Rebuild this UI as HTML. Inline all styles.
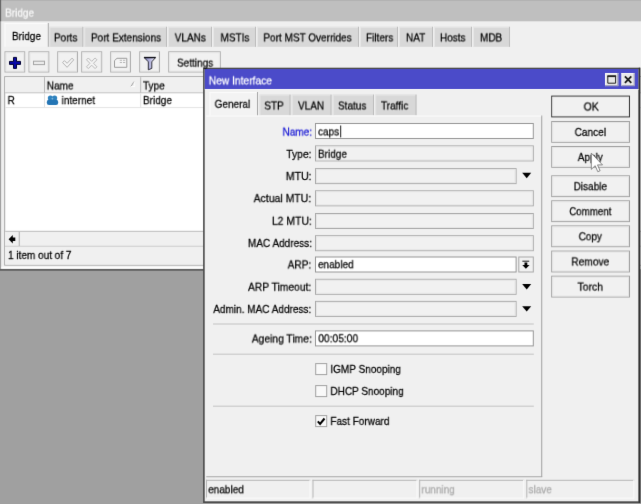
<!DOCTYPE html>
<html><head><meta charset="utf-8"><title>Bridge</title>
<style>
*{box-sizing:border-box;margin:0;padding:0}
html,body{width:641px;height:504px;overflow:hidden;background:#a0a0a0}
body{position:relative;font-family:"Liberation Sans",sans-serif;font-size:11px;color:#000;line-height:13px;-webkit-text-stroke:.25px}
#all{position:absolute;left:0;top:0;width:641px;height:504px;background:#a0a0a0;overflow:hidden;filter:url(#soft)}
svg{position:absolute;left:0;top:0}
.t{position:absolute;top:0;display:block;white-space:nowrap;will-change:transform}
</style></head><body>
<svg width="0" height="0"><filter id="soft" x="0" y="0" width="100%" height="100%" color-interpolation-filters="sRGB"><feConvolveMatrix order="3" kernelMatrix="0 1 0 1 12 1 0 1 0" edgeMode="duplicate" preserveAlpha="true"/></filter></svg>
<div id="all">
<svg width="641" height="504" viewBox="0 0 641 504">
<rect x="0" y="0" width="641" height="269.2" fill="#f0f0f0"/>
<rect x="0" y="0" width="641" height="21.3" fill="#bfbfbf"/>
<rect x="0" y="0" width="641" height="1" fill="#b2b2b2"/>
<rect x="0" y="0" width="1.1" height="269.2" fill="#a0a0a0"/>
<rect x="0" y="0" width="1.1" height="21.3" fill="#666"/>
<rect x="0" y="269.2" width="204" height="1.4" fill="#4c4c4c"/>
<rect x="4.5" y="23" width="44.3" height="23.799999999999997" fill="#f3f3f3"/>
<path d="M5.0 23L5.0 46.8" stroke="#fbfbfb" stroke-width="1" fill="none"/>
<path d="M4.5 23.5L48.8 23.5" stroke="#fbfbfb" stroke-width="1" fill="none"/>
<path d="M48.3 23L48.3 46.8" stroke="#a8a8a8" stroke-width="1" fill="none"/>
<rect x="49.3" y="26.8" width="34.0" height="19.999999999999996" fill="#d8d8d8"/>
<path d="M49.8 26.8L49.8 46.8" stroke="#e6e6e6" stroke-width="1" fill="none"/>
<path d="M49.3 27.3L83.3 27.3" stroke="#e6e6e6" stroke-width="1" fill="none"/>
<path d="M82.8 26.8L82.8 46.8" stroke="#bcbcbc" stroke-width="1" fill="none"/>
<rect x="84.3" y="26.8" width="82.7" height="19.999999999999996" fill="#d8d8d8"/>
<path d="M84.8 26.8L84.8 46.8" stroke="#e6e6e6" stroke-width="1" fill="none"/>
<path d="M84.3 27.3L167 27.3" stroke="#e6e6e6" stroke-width="1" fill="none"/>
<path d="M166.5 26.8L166.5 46.8" stroke="#bcbcbc" stroke-width="1" fill="none"/>
<rect x="168" y="26.8" width="44" height="19.999999999999996" fill="#d8d8d8"/>
<path d="M168.5 26.8L168.5 46.8" stroke="#e6e6e6" stroke-width="1" fill="none"/>
<path d="M168 27.3L212 27.3" stroke="#e6e6e6" stroke-width="1" fill="none"/>
<path d="M211.5 26.8L211.5 46.8" stroke="#bcbcbc" stroke-width="1" fill="none"/>
<rect x="213" y="26.8" width="43" height="19.999999999999996" fill="#d8d8d8"/>
<path d="M213.5 26.8L213.5 46.8" stroke="#e6e6e6" stroke-width="1" fill="none"/>
<path d="M213 27.3L256 27.3" stroke="#e6e6e6" stroke-width="1" fill="none"/>
<path d="M255.5 26.8L255.5 46.8" stroke="#bcbcbc" stroke-width="1" fill="none"/>
<rect x="257" y="26.8" width="102" height="19.999999999999996" fill="#d8d8d8"/>
<path d="M257.5 26.8L257.5 46.8" stroke="#e6e6e6" stroke-width="1" fill="none"/>
<path d="M257 27.3L359 27.3" stroke="#e6e6e6" stroke-width="1" fill="none"/>
<path d="M358.5 26.8L358.5 46.8" stroke="#bcbcbc" stroke-width="1" fill="none"/>
<rect x="360" y="26.8" width="38" height="19.999999999999996" fill="#d8d8d8"/>
<path d="M360.5 26.8L360.5 46.8" stroke="#e6e6e6" stroke-width="1" fill="none"/>
<path d="M360 27.3L398 27.3" stroke="#e6e6e6" stroke-width="1" fill="none"/>
<path d="M397.5 26.8L397.5 46.8" stroke="#bcbcbc" stroke-width="1" fill="none"/>
<rect x="399" y="26.8" width="34" height="19.999999999999996" fill="#d8d8d8"/>
<path d="M399.5 26.8L399.5 46.8" stroke="#e6e6e6" stroke-width="1" fill="none"/>
<path d="M399 27.3L433 27.3" stroke="#e6e6e6" stroke-width="1" fill="none"/>
<path d="M432.5 26.8L432.5 46.8" stroke="#bcbcbc" stroke-width="1" fill="none"/>
<rect x="434" y="26.8" width="38" height="19.999999999999996" fill="#d8d8d8"/>
<path d="M434.5 26.8L434.5 46.8" stroke="#e6e6e6" stroke-width="1" fill="none"/>
<path d="M434 27.3L472 27.3" stroke="#e6e6e6" stroke-width="1" fill="none"/>
<path d="M471.5 26.8L471.5 46.8" stroke="#bcbcbc" stroke-width="1" fill="none"/>
<rect x="473" y="26.8" width="37" height="19.999999999999996" fill="#d8d8d8"/>
<path d="M473.5 26.8L473.5 46.8" stroke="#e6e6e6" stroke-width="1" fill="none"/>
<path d="M473 27.3L510 27.3" stroke="#e6e6e6" stroke-width="1" fill="none"/>
<path d="M509.5 26.8L509.5 46.8" stroke="#bcbcbc" stroke-width="1" fill="none"/>
<rect x="5.0" y="51.8" width="19.7" height="20.200000000000003" fill="#f1f1f1" stroke="#adadad" stroke-width="1"/>
<rect x="6.0" y="52.8" width="17.7" height="18.200000000000003" fill="none" stroke="#e8e8e8" stroke-width="1"/>
<rect x="29.0" y="51.8" width="19.799999999999997" height="20.200000000000003" fill="#f1f1f1" stroke="#adadad" stroke-width="1"/>
<rect x="30.0" y="52.8" width="17.799999999999997" height="18.200000000000003" fill="none" stroke="#e8e8e8" stroke-width="1"/>
<rect x="57.7" y="51.8" width="19.799999999999997" height="20.200000000000003" fill="#f1f1f1" stroke="#adadad" stroke-width="1"/>
<rect x="58.7" y="52.8" width="17.799999999999997" height="18.200000000000003" fill="none" stroke="#e8e8e8" stroke-width="1"/>
<rect x="81.7" y="51.8" width="20.0" height="20.200000000000003" fill="#f1f1f1" stroke="#adadad" stroke-width="1"/>
<rect x="82.7" y="52.8" width="18.0" height="18.200000000000003" fill="none" stroke="#e8e8e8" stroke-width="1"/>
<rect x="110.7" y="51.8" width="19.799999999999997" height="20.200000000000003" fill="#f1f1f1" stroke="#adadad" stroke-width="1"/>
<rect x="111.7" y="52.8" width="17.799999999999997" height="18.200000000000003" fill="none" stroke="#e8e8e8" stroke-width="1"/>
<rect x="139.7" y="51.8" width="19.80000000000001" height="20.200000000000003" fill="#f1f1f1" stroke="#adadad" stroke-width="1"/>
<rect x="140.7" y="52.8" width="17.80000000000001" height="18.200000000000003" fill="none" stroke="#e8e8e8" stroke-width="1"/>
<rect x="168.7" y="51.8" width="51.60000000000002" height="20.200000000000003" fill="#f1f1f1" stroke="#adadad" stroke-width="1"/>
<rect x="169.7" y="52.8" width="49.60000000000002" height="18.200000000000003" fill="none" stroke="#e8e8e8" stroke-width="1"/>
<path d="M13.5 57.4h3v4h4v3h-4v4h-3v-4h-4v-3h4z" fill="#0808a8" stroke="#000030" stroke-width="1"/>
<rect x="33.5" y="61.2" width="11" height="3.4" fill="#ececec" stroke="#a4a4a4" stroke-width="1"/>
<path d="M62.5 62.5l2-1.8 2.6 2.6 5-5.2 1.6 1.8-6.6 7.4z" fill="#f4f4f4" stroke="#b4b4b4" stroke-width="1"/>
<path d="M86.5 59.8l1.8-1.8 3.4 3.4 3.4-3.4 1.8 1.8-3.4 3.5 3.4 3.5-1.8 1.8-3.4-3.4-3.4 3.4-1.8-1.8 3.4-3.5z" fill="#f4f4f4" stroke="#bababa" stroke-width="1"/>
<path d="M114.5 60.6l2.5-2.3h9.8v9h-12.3z" fill="#f4f4f4" stroke="#9c9c9c" stroke-width="1"/>
<path d="M119.8 60.3h2.2M123 60.3h2.2M119.8 62.5h2.2M123 62.5h2.2" fill="none" stroke="#b0b0b0" stroke-width="0.9"/>
<defs><linearGradient id="fg" x1="0" x2="1" y1="0" y2="0"><stop offset="0" stop-color="#7c7cbc"/><stop offset=".5" stop-color="#b4b4de"/><stop offset="1" stop-color="#f4f4fc"/></linearGradient></defs>
<path d="M144.3 57.7h11.1l-3.6 4.1v6.6l-3.5 1.4v-8z" fill="url(#fg)" stroke="#20202a" stroke-width="0.9" stroke-linejoin="round"/>
<path d="M144 57.5h11.7" fill="none" stroke="#101018" stroke-width="1.3"/>
<rect x="4.7" y="76.7" width="639.8" height="188.40000000000003" fill="#fff" stroke="#a4a4a4" stroke-width="1"/>
<path d="M1.2 267.4L204 267.4" stroke="#fdfdfd" stroke-width="1.2" fill="none"/>
<rect x="5.2" y="77.2" width="640" height="15.3" fill="#f0f0f0"/>
<path d="M5.2 92.8L641 92.8" stroke="#c0c0c0" stroke-width="1" fill="none"/>
<path d="M44.5 77.2L44.5 92.8" stroke="#b8b8b8" stroke-width="1" fill="none"/>
<path d="M140.7 77.2L140.7 92.8" stroke="#b8b8b8" stroke-width="1" fill="none"/>
<path d="M44.5 93.3L44.5 107.5" stroke="#e0e0e0" stroke-width="1" fill="none"/>
<path d="M140.7 93.3L140.7 107.5" stroke="#e0e0e0" stroke-width="1" fill="none"/>
<path d="M5.2 107.6L641 107.6" stroke="#e4e4e4" stroke-width="1" fill="none"/>
<path d="M131 86.5l3-5" fill="none" stroke="#a0a0a0" stroke-width="1"/>
<path d="M134 81.5l1 5h-4" fill="none" stroke="#fcfcfc" stroke-width="1"/>
<g><circle cx="50.4" cy="98" r="2.6" fill="#2f82be"/><circle cx="54.6" cy="98" r="2.6" fill="#2f82be"/><rect x="46.8" y="99.8" width="11.4" height="5.2" rx="2.2" fill="#2475b5"/><circle cx="52.4" cy="98.6" r=".9" fill="#7ab6de"/></g>
<rect x="5.2" y="231" width="640" height="15.2" fill="#f0f0f0"/>
<path d="M5.2 231.3L641 231.3" stroke="#bcbcbc" stroke-width="1" fill="none"/>
<path d="M5.2 246.3L641 246.3" stroke="#bcbcbc" stroke-width="1" fill="none"/>
<path d="M19.3 231.5L19.3 246" stroke="#b8b8b8" stroke-width="1.2" fill="none"/>
<path d="M8.6 239.2l4.2-4.3v2.6h2.5v3.4h-2.5v2.6z" fill="#000"/>
<rect x="5.2" y="246.7" width="640" height="17.9" fill="#f0f0f0"/>
<rect x="203.10000000000002" y="67.7" width="437.19999999999993" height="435.3" fill="#4a4a4a"/>
<rect x="204.70000000000002" y="69.1" width="433.69999999999993" height="432.2" fill="#f0f0f0"/>
<rect x="204.8" y="69.0" width="433.4" height="20.0" fill="#4b4bc9"/>
<rect x="638.8" y="67.7" width="1.4" height="435.3" fill="#303030"/>
<path d="M204.8 89.5L638.6 89.5" stroke="#f8f8f8" stroke-width="0.8" fill="none"/>
<rect x="605" y="73" width="13.299999999999955" height="13.099999999999994" fill="#e8e8e8"/>
<path d="M605 73.5L618.3 73.5" stroke="#f8f8f8" stroke-width="1" fill="none"/>
<path d="M605.5 73L605.5 86.1" stroke="#f8f8f8" stroke-width="1" fill="none"/>
<path d="M605 85.6L618.3 85.6" stroke="#9c9cb8" stroke-width="1" fill="none"/>
<path d="M617.8 73L617.8 86.1" stroke="#9c9cb8" stroke-width="1" fill="none"/>
<rect x="621.5" y="73" width="13.200000000000045" height="13.099999999999994" fill="#e8e8e8"/>
<path d="M621.5 73.5L634.7 73.5" stroke="#f8f8f8" stroke-width="1" fill="none"/>
<path d="M622.0 73L622.0 86.1" stroke="#f8f8f8" stroke-width="1" fill="none"/>
<path d="M621.5 85.6L634.7 85.6" stroke="#9c9cb8" stroke-width="1" fill="none"/>
<path d="M634.2 73L634.2 86.1" stroke="#9c9cb8" stroke-width="1" fill="none"/>
<path d="M607.8 76.2h7.8v7h-7.8z" fill="none" stroke="#202020" stroke-width="1"/>
<path d="M607.3 76.2L616.1 76.2" stroke="#202020" stroke-width="1.8" fill="none"/>
<path d="M624.9 76.4l6.4 6.4M631.3 76.4l-6.4 6.4" fill="none" stroke="#181818" stroke-width="1.8"/>
<rect x="209.5" y="92" width="48.5" height="23.5" fill="#f3f3f3"/>
<path d="M210.0 92L210.0 115.5" stroke="#fbfbfb" stroke-width="1" fill="none"/>
<path d="M209.5 92.5L258 92.5" stroke="#fbfbfb" stroke-width="1" fill="none"/>
<path d="M257.5 92L257.5 115.5" stroke="#a8a8a8" stroke-width="1" fill="none"/>
<rect x="259.5" y="94.6" width="31.0" height="20.60000000000001" fill="#d8d8d8"/>
<path d="M260.0 94.6L260.0 115.2" stroke="#e6e6e6" stroke-width="1" fill="none"/>
<path d="M259.5 95.1L290.5 95.1" stroke="#e6e6e6" stroke-width="1" fill="none"/>
<path d="M290.0 94.6L290.0 115.2" stroke="#bcbcbc" stroke-width="1" fill="none"/>
<rect x="291.7" y="94.6" width="39.80000000000001" height="20.60000000000001" fill="#d8d8d8"/>
<path d="M292.2 94.6L292.2 115.2" stroke="#e6e6e6" stroke-width="1" fill="none"/>
<path d="M291.7 95.1L331.5 95.1" stroke="#e6e6e6" stroke-width="1" fill="none"/>
<path d="M331.0 94.6L331.0 115.2" stroke="#bcbcbc" stroke-width="1" fill="none"/>
<rect x="332.7" y="94.6" width="41.30000000000001" height="20.60000000000001" fill="#d8d8d8"/>
<path d="M333.2 94.6L333.2 115.2" stroke="#e6e6e6" stroke-width="1" fill="none"/>
<path d="M332.7 95.1L374 95.1" stroke="#e6e6e6" stroke-width="1" fill="none"/>
<path d="M373.5 94.6L373.5 115.2" stroke="#bcbcbc" stroke-width="1" fill="none"/>
<rect x="375.2" y="94.6" width="41.30000000000001" height="20.60000000000001" fill="#d8d8d8"/>
<path d="M375.7 94.6L375.7 115.2" stroke="#e6e6e6" stroke-width="1" fill="none"/>
<path d="M375.2 95.1L416.5 95.1" stroke="#e6e6e6" stroke-width="1" fill="none"/>
<path d="M416.0 94.6L416.0 115.2" stroke="#bcbcbc" stroke-width="1" fill="none"/>
<path d="M541.7 115.6L541.7 477.1" stroke="#a6a6a6" stroke-width="1.1" fill="none"/>
<path d="M206 116L541.2 116" stroke="#fbfbfb" stroke-width="1" fill="none"/>
<path d="M206.3 476.7L542.2 476.7" stroke="#a6a6a6" stroke-width="1.1" fill="none"/>
<rect x="315.5" y="123.5" width="217.79999999999995" height="15.0" fill="#fff" stroke="#969696" stroke-width="1"/>
<path d="M340.7 125.5L340.7 137.4" stroke="#000" stroke-width="0.9" fill="none"/>
<rect x="315.5" y="145.9" width="217.79999999999995" height="15.0" fill="#f1f1f1" stroke="#a8a8a8" stroke-width="1"/>
<rect x="316.5" y="146.9" width="215.79999999999995" height="13.0" fill="none" stroke="#e6e6e6" stroke-width="1"/>
<rect x="315.5" y="168.6" width="200.60000000000002" height="15.0" fill="#f1f1f1" stroke="#a8a8a8" stroke-width="1"/>
<rect x="316.5" y="169.6" width="198.60000000000002" height="13.0" fill="none" stroke="#e6e6e6" stroke-width="1"/>
<rect x="315.5" y="190.8" width="217.79999999999995" height="15.0" fill="#f1f1f1" stroke="#a8a8a8" stroke-width="1"/>
<rect x="316.5" y="191.8" width="215.79999999999995" height="13.0" fill="none" stroke="#e6e6e6" stroke-width="1"/>
<rect x="315.5" y="213.5" width="217.79999999999995" height="15.0" fill="#f1f1f1" stroke="#a8a8a8" stroke-width="1"/>
<rect x="316.5" y="214.5" width="215.79999999999995" height="13.0" fill="none" stroke="#e6e6e6" stroke-width="1"/>
<rect x="315.5" y="235.7" width="217.79999999999995" height="15.0" fill="#f1f1f1" stroke="#a8a8a8" stroke-width="1"/>
<rect x="316.5" y="236.7" width="215.79999999999995" height="13.0" fill="none" stroke="#e6e6e6" stroke-width="1"/>
<rect x="315.5" y="257.0" width="200.60000000000002" height="15.0" fill="#fff" stroke="#969696" stroke-width="1"/>
<rect x="315.5" y="279.3" width="200.60000000000002" height="15.0" fill="#f1f1f1" stroke="#a8a8a8" stroke-width="1"/>
<rect x="316.5" y="280.3" width="198.60000000000002" height="13.0" fill="none" stroke="#e6e6e6" stroke-width="1"/>
<rect x="315.5" y="301.4" width="200.60000000000002" height="15.0" fill="#f1f1f1" stroke="#a8a8a8" stroke-width="1"/>
<rect x="316.5" y="302.4" width="198.60000000000002" height="13.0" fill="none" stroke="#e6e6e6" stroke-width="1"/>
<rect x="315.5" y="330.9" width="217.79999999999995" height="15.0" fill="#fff" stroke="#969696" stroke-width="1"/>
<path d="M522.2 172.8h9l-4.5 5.4z" fill="#000"/>
<path d="M522.2 284h9l-4.5 5.4z" fill="#000"/>
<path d="M522.2 306.2h9l-4.5 5.4z" fill="#000"/>
<rect x="518.8" y="257.0" width="14.5" height="15.0" fill="#f1f1f1" stroke="#a8a8a8" stroke-width="1"/>
<path d="M522.4 261.2L529.2 261.2" stroke="#000" stroke-width="0.9" fill="none"/>
<path d="M524.5 262.6h2.8v2.4h2.2l-3.6 3.8-3.6-3.8h2.2z" fill="#000"/>
<path d="M213 324L533.8 324" stroke="#c2c2c2" stroke-width="1" fill="none"/>
<path d="M213 354.2L533.8 354.2" stroke="#c2c2c2" stroke-width="1" fill="none"/>
<path d="M213 406.2L533.8 406.2" stroke="#c2c2c2" stroke-width="1" fill="none"/>
<rect x="315.7" y="363.6" width="11.0" height="11.0" fill="#f9f9f9" stroke="#a0a0a0" stroke-width="1"/>
<rect x="315.7" y="385.6" width="11.0" height="11.0" fill="#f9f9f9" stroke="#a0a0a0" stroke-width="1"/>
<rect x="315.7" y="415.6" width="11.0" height="11.0" fill="#f9f9f9" stroke="#a0a0a0" stroke-width="1"/>
<path d="M317.8 421.3l2.3 2.6 4.4-5.4" fill="none" stroke="#000" stroke-width="2"/>
<rect x="551.85" y="96.25" width="77.49999999999996" height="20.499999999999996" fill="#f1f1f1" stroke="#383838" stroke-width="1.3"/>
<rect x="552.7" y="97.1" width="75.79999999999995" height="18.799999999999997" fill="none" stroke="#e6e6e6" stroke-width="1"/>
<rect x="551.7" y="121.5" width="77.79999999999995" height="20.80000000000001" fill="#f1f1f1" stroke="#a0a0a0" stroke-width="1"/>
<rect x="552.7" y="122.5" width="75.79999999999995" height="18.80000000000001" fill="none" stroke="#e6e6e6" stroke-width="1"/>
<rect x="551.7" y="146.5" width="77.79999999999995" height="20.80000000000001" fill="#f1f1f1" stroke="#a0a0a0" stroke-width="1"/>
<rect x="552.7" y="147.5" width="75.79999999999995" height="18.80000000000001" fill="none" stroke="#e6e6e6" stroke-width="1"/>
<rect x="551.7" y="175.8" width="77.79999999999995" height="20.80000000000001" fill="#f1f1f1" stroke="#a0a0a0" stroke-width="1"/>
<rect x="552.7" y="176.8" width="75.79999999999995" height="18.80000000000001" fill="none" stroke="#e6e6e6" stroke-width="1"/>
<rect x="551.7" y="200.8" width="77.79999999999995" height="20.80000000000001" fill="#f1f1f1" stroke="#a0a0a0" stroke-width="1"/>
<rect x="552.7" y="201.8" width="75.79999999999995" height="18.80000000000001" fill="none" stroke="#e6e6e6" stroke-width="1"/>
<rect x="551.7" y="225.9" width="77.79999999999995" height="20.80000000000001" fill="#f1f1f1" stroke="#a0a0a0" stroke-width="1"/>
<rect x="552.7" y="226.9" width="75.79999999999995" height="18.80000000000001" fill="none" stroke="#e6e6e6" stroke-width="1"/>
<rect x="551.7" y="251.1" width="77.79999999999995" height="20.799999999999983" fill="#f1f1f1" stroke="#a0a0a0" stroke-width="1"/>
<rect x="552.7" y="252.1" width="75.79999999999995" height="18.799999999999983" fill="none" stroke="#e6e6e6" stroke-width="1"/>
<rect x="551.7" y="276.2" width="77.79999999999995" height="20.80000000000001" fill="#f1f1f1" stroke="#a0a0a0" stroke-width="1"/>
<rect x="552.7" y="277.2" width="75.79999999999995" height="18.80000000000001" fill="none" stroke="#e6e6e6" stroke-width="1"/>
<path d="M206 480.3L310.5 480.3" stroke="#b6b6b6" stroke-width="1" fill="none"/>
<path d="M206.5 479.8L206.5 498.6" stroke="#b6b6b6" stroke-width="1" fill="none"/>
<path d="M206 498.1L310.5 498.1" stroke="#fafafa" stroke-width="1" fill="none"/>
<path d="M310.0 479.8L310.0 498.6" stroke="#fafafa" stroke-width="1" fill="none"/>
<path d="M312.5 480.3L417.5 480.3" stroke="#b6b6b6" stroke-width="1" fill="none"/>
<path d="M313.0 479.8L313.0 498.6" stroke="#b6b6b6" stroke-width="1" fill="none"/>
<path d="M312.5 498.1L417.5 498.1" stroke="#fafafa" stroke-width="1" fill="none"/>
<path d="M417.0 479.8L417.0 498.6" stroke="#fafafa" stroke-width="1" fill="none"/>
<path d="M419.2 480.3L524.2 480.3" stroke="#b6b6b6" stroke-width="1" fill="none"/>
<path d="M419.7 479.8L419.7 498.6" stroke="#b6b6b6" stroke-width="1" fill="none"/>
<path d="M419.2 498.1L524.2 498.1" stroke="#fafafa" stroke-width="1" fill="none"/>
<path d="M523.7 479.8L523.7 498.6" stroke="#fafafa" stroke-width="1" fill="none"/>
<path d="M526.3 480.3L634.3 480.3" stroke="#b6b6b6" stroke-width="1" fill="none"/>
<path d="M526.8 479.8L526.8 498.6" stroke="#b6b6b6" stroke-width="1" fill="none"/>
<path d="M526.3 498.1L634.3 498.1" stroke="#fafafa" stroke-width="1" fill="none"/>
<path d="M633.8 479.8L633.8 498.6" stroke="#fafafa" stroke-width="1" fill="none"/>
</svg>
<span class="t" style="color:#fafafa;left:0;transform-origin:0 0;transform:translate(5.2px,5.6px) scale(0.905,1.06);">Bridge</span>
<span class="t" style="left:0;transform-origin:0 0;transform:translate(12px,29.0px) scale(0.91,1.06);">Bridge</span>
<span class="t" style="left:0;transform-origin:0 0;transform:translate(54px,30.4px) scale(0.91,1.06);">Ports</span>
<span class="t" style="left:0;transform-origin:0 0;transform:translate(91px,30.4px) scale(0.91,1.06);">Port Extensions</span>
<span class="t" style="left:0;transform-origin:0 0;transform:translate(174.7px,30.4px) scale(0.91,1.06);">VLANs</span>
<span class="t" style="left:0;transform-origin:0 0;transform:translate(220.5px,30.4px) scale(0.91,1.06);">MSTIs</span>
<span class="t" style="left:0;transform-origin:0 0;transform:translate(263.4px,30.4px) scale(0.91,1.06);">Port MST Overrides</span>
<span class="t" style="left:0;transform-origin:0 0;transform:translate(366px,30.4px) scale(0.91,1.06);">Filters</span>
<span class="t" style="left:0;transform-origin:0 0;transform:translate(406px,30.4px) scale(0.91,1.06);">NAT</span>
<span class="t" style="left:0;transform-origin:0 0;transform:translate(440px,30.4px) scale(0.91,1.06);">Hosts</span>
<span class="t" style="left:0;transform-origin:0 0;transform:translate(480px,30.4px) scale(0.91,1.06);">MDB</span>
<span class="t" style="left:0;transform-origin:0 0;transform:translate(177px,55.6px) scale(0.91,1.06);">Settings</span>
<span class="t" style="left:0;transform-origin:0 0;transform:translate(46.8px,78.5px) scale(0.91,1.06);">Name</span>
<span class="t" style="left:0;transform-origin:0 0;transform:translate(143px,78.5px) scale(0.91,1.06);">Type</span>
<span class="t" style="left:0;transform-origin:0 0;transform:translate(7.6px,93.1px) scale(0.91,1.06);">R</span>
<span class="t" style="left:0;transform-origin:0 0;transform:translate(61.6px,93.1px) scale(0.91,1.06);">internet</span>
<span class="t" style="left:0;transform-origin:0 0;transform:translate(143px,93.1px) scale(0.91,1.06);">Bridge</span>
<span class="t" style="left:0;transform-origin:0 0;transform:translate(8px,247.9px) scale(0.91,1.06);">1 item out of 7</span>
<span class="t" style="color:#fff;left:0;transform-origin:0 0;transform:translate(208.8px,73.4px) scale(0.93,1.06);">New Interface</span>
<span class="t" style="left:0;transform-origin:0 0;transform:translate(214.6px,96.8px) scale(0.91,1.06);">General</span>
<span class="t" style="left:0;transform-origin:0 0;transform:translate(264.3px,98.5px) scale(0.91,1.06);">STP</span>
<span class="t" style="left:0;transform-origin:0 0;transform:translate(298px,98.5px) scale(0.91,1.06);">VLAN</span>
<span class="t" style="left:0;transform-origin:0 0;transform:translate(338px,98.5px) scale(0.91,1.06);">Status</span>
<span class="t" style="left:0;transform-origin:0 0;transform:translate(381px,98.5px) scale(0.91,1.06);">Traffic</span>
<span class="t" style="color:#1414d4;right:641px;transform-origin:100% 0;transform:translate(311.6px,124.6px) scale(0.91,1.06);">Name:</span>
<span class="t" style="left:0;transform-origin:0 0;transform:translate(318px,124.39999999999999px) scale(0.91,1.06);">caps</span>
<span class="t" style="right:641px;transform-origin:100% 0;transform:translate(311.6px,146.9px) scale(0.935,1.06);">Type:</span>
<span class="t" style="left:0;transform-origin:0 0;transform:translate(318px,146.70000000000002px) scale(0.91,1.06);">Bridge</span>
<span class="t" style="right:641px;transform-origin:100% 0;transform:translate(311.6px,169.0px) scale(0.955,1.06);">MTU:</span>
<span class="t" style="right:641px;transform-origin:100% 0;transform:translate(311.6px,191.10000000000002px) scale(0.95,1.06);">Actual MTU:</span>
<span class="t" style="right:641px;transform-origin:100% 0;transform:translate(311.6px,213.7px) scale(0.945,1.06);">L2 MTU:</span>
<span class="t" style="right:641px;transform-origin:100% 0;transform:translate(311.6px,235.89999999999998px) scale(0.91,1.06);">MAC Address:</span>
<span class="t" style="right:641px;transform-origin:100% 0;transform:translate(311.6px,257.4px) scale(0.92,1.06);">ARP:</span>
<span class="t" style="left:0;transform-origin:0 0;transform:translate(318px,257.2px) scale(0.91,1.06);">enabled</span>
<span class="t" style="right:641px;transform-origin:100% 0;transform:translate(311.6px,279.7px) scale(0.935,1.06);">ARP Timeout:</span>
<span class="t" style="right:641px;transform-origin:100% 0;transform:translate(311.6px,301.9px) scale(0.91,1.06);">Admin. MAC Address:</span>
<span class="t" style="right:641px;transform-origin:100% 0;transform:translate(311.6px,331.5px) scale(0.935,1.06);">Ageing Time:</span>
<span class="t" style="left:0;transform-origin:0 0;transform:translate(318.3px,331.3px) scale(0.93,1.06);">00:05:00</span>
<span class="t" style="left:0;transform-origin:0 0;transform:translate(330.4px,361.90000000000003px) scale(0.91,1.06);">IGMP Snooping</span>
<span class="t" style="left:0;transform-origin:0 0;transform:translate(330.4px,383.90000000000003px) scale(0.91,1.06);">DHCP Snooping</span>
<span class="t" style="left:0;transform-origin:0 0;transform:translate(330.4px,413.90000000000003px) scale(0.91,1.06);">Fast Forward</span>
<span class="t" style="left:0;width:200px;text-align:center;transform-origin:50% 0;transform:translate(491.29999999999995px,99.5px) scale(0.96,1.06);">OK</span>
<span class="t" style="left:0;width:200px;text-align:center;transform-origin:50% 0;transform:translate(490.29999999999995px,124.9px) scale(0.92,1.06);">Cancel</span>
<span class="t" style="left:0;width:200px;text-align:center;transform-origin:50% 0;transform:translate(490.29999999999995px,149.9px) scale(0.91,1.06);">Apply</span>
<span class="t" style="left:0;width:200px;text-align:center;transform-origin:50% 0;transform:translate(490.29999999999995px,179.20000000000002px) scale(0.91,1.06);">Disable</span>
<span class="t" style="left:0;width:200px;text-align:center;transform-origin:50% 0;transform:translate(490.29999999999995px,204.20000000000002px) scale(0.885,1.06);">Comment</span>
<span class="t" style="left:0;width:200px;text-align:center;transform-origin:50% 0;transform:translate(490.29999999999995px,229.3px) scale(0.91,1.06);">Copy</span>
<span class="t" style="left:0;width:200px;text-align:center;transform-origin:50% 0;transform:translate(490.29999999999995px,254.5px) scale(0.93,1.06);">Remove</span>
<span class="t" style="left:0;width:200px;text-align:center;transform-origin:50% 0;transform:translate(490.29999999999995px,279.59999999999997px) scale(0.95,1.06);">Torch</span>
<span class="t" style="left:0;transform-origin:0 0;transform:translate(208.2px,482.3px) scale(0.91,1.06);">enabled</span>
<span class="t" style="color:#aaa;left:0;transform-origin:0 0;transform:translate(421.4px,482.3px) scale(0.91,1.06);">running</span>
<span class="t" style="color:#aaa;left:0;transform-origin:0 0;transform:translate(528.5px,482.3px) scale(0.91,1.06);">slave</span>
<svg class="cur" width="641" height="504" viewBox="0 0 641 504"><path d="M591.3 153.1v16.2l3.9-3.6 2.6 6 2.3-1-2.6-5.8h5z" fill="#fff" stroke="#6a6a6a" stroke-width=".8" stroke-linejoin="round"/></svg>
</div>
</body></html>
